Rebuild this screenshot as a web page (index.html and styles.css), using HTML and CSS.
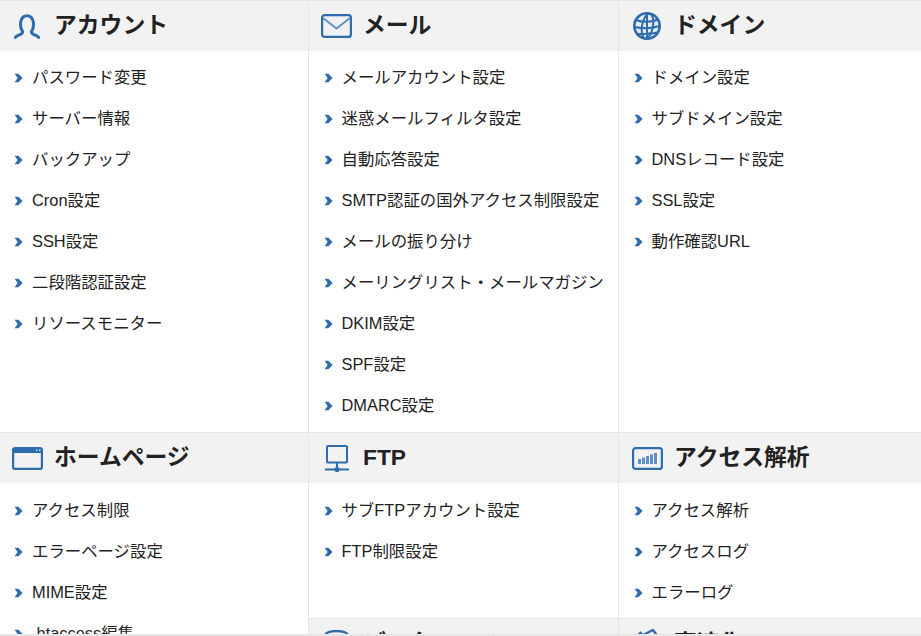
FILE: index.html
```html
<!DOCTYPE html>
<html lang="ja">
<head>
<meta charset="utf-8">
<title>サーバー管理</title>
<link rel="stylesheet" href="styles.css">
</head>
<body>
<svg class="defs" width="0" height="0" aria-hidden="true">
  <defs>
    <symbol id="chev" viewBox="0 0 9 10"><path d="M0.6 0.8 H4.4 L8.6 5 L4.4 9.2 H0.6 L3.6 5 Z"/></symbol>
  </defs>
</svg>
<main class="board">
  <div class="column">
    <section class="panel tall">
      <h2 class="head"><span class="slot"><svg width="26" height="25" viewBox="0 0 26 25" fill="none" stroke="#2f6cae" stroke-width="3" stroke-linecap="round"><path d="M8.500 17.500 C5 12 6 1.700 13 1.700 C20 1.700 21 12 17.500 17.500 C17 19 19 20.500 21 21 C23 21.700 24.300 22.800 24.700 23.500"/><path d="M8.500 17.500 C9 19 7 20.500 5 21 C3 21.700 1.700 22.800 1.300 23.500"/></svg></span><span>アカウント</span></h2>
      <ul class="list">
        <li><svg class="chev"><use href="#chev"/></svg>パスワード変更</li>
        <li><svg class="chev"><use href="#chev"/></svg>サーバー情報</li>
        <li><svg class="chev"><use href="#chev"/></svg>バックアップ</li>
        <li><svg class="chev"><use href="#chev"/></svg>Cron設定</li>
        <li><svg class="chev"><use href="#chev"/></svg>SSH設定</li>
        <li><svg class="chev"><use href="#chev"/></svg>二段階認証設定</li>
        <li><svg class="chev"><use href="#chev"/></svg>リソースモニター</li>
      </ul>
    </section>
    <section class="panel">
      <h2 class="head"><span class="slot"><svg width="31" height="23" viewBox="0 0 31 23" fill="none" stroke="#2f6cae" stroke-width="2.200"><rect x="1.100" y="1.100" width="28.800" height="20.800" rx="2"/><rect x="1" y="1" width="29" height="5" fill="#2f6cae" stroke="none"/><g fill="#cfe0f1" stroke="none"><rect x="24" y="2.500" width="1.500" height="1.500"/><rect x="27" y="2.500" width="1.500" height="1.500"/></g></svg></span><span>ホームページ</span></h2>
      <ul class="list lower">
        <li><svg class="chev"><use href="#chev"/></svg>アクセス制限</li>
        <li><svg class="chev"><use href="#chev"/></svg>エラーページ設定</li>
        <li><svg class="chev"><use href="#chev"/></svg>MIME設定</li>
        <li><svg class="chev"><use href="#chev"/></svg>.htaccess編集</li>
      </ul>
    </section>
  </div>
  <div class="column">
    <section class="panel tall">
      <h2 class="head"><span class="slot"><svg width="31" height="24" viewBox="0 0 31 24" fill="none" stroke="#2f6cae" stroke-width="2.200"><rect x="1.100" y="1.100" width="28.800" height="21.800" rx="2.500"/><path d="M2 4 L15.500 14.500 L29 4" stroke-width="2" stroke="#5f92c9"/></svg></span><span>メール</span></h2>
      <ul class="list">
        <li><svg class="chev"><use href="#chev"/></svg>メールアカウント設定</li>
        <li><svg class="chev"><use href="#chev"/></svg>迷惑メールフィルタ設定</li>
        <li><svg class="chev"><use href="#chev"/></svg>自動応答設定</li>
        <li><svg class="chev"><use href="#chev"/></svg>SMTP認証の国外アクセス制限設定</li>
        <li><svg class="chev"><use href="#chev"/></svg>メールの振り分け</li>
        <li><svg class="chev"><use href="#chev"/></svg>メーリングリスト・メールマガジン</li>
        <li><svg class="chev"><use href="#chev"/></svg>DKIM設定</li>
        <li><svg class="chev"><use href="#chev"/></svg>SPF設定</li>
        <li><svg class="chev"><use href="#chev"/></svg>DMARC設定</li>
      </ul>
    </section>
    <section class="panel short">
      <h2 class="head"><span class="slot"><svg width="25" height="27" viewBox="0 0 25 27" fill="none" stroke="#2f6cae" stroke-width="2"><rect x="3" y="1" width="20" height="16.500" rx="1"/><path d="M13 18 V24 M1 24.500 H25"/><circle cx="13" cy="24.500" r="2.600" fill="#2f6cae" stroke="none"/></svg></span><span>FTP</span></h2>
      <ul class="list lower">
        <li><svg class="chev"><use href="#chev"/></svg>サブFTPアカウント設定</li>
        <li><svg class="chev"><use href="#chev"/></svg>FTP制限設定</li>
      </ul>
    </section>
    <section class="panel">
      <h2 class="head"><span class="slot"><svg width="25" height="28" viewBox="0 0 25 28" fill="none" stroke="#2f6cae" stroke-width="2.400"><ellipse cx="12.500" cy="5" rx="11" ry="4"/><path d="M1.500 5 V23 C1.500 25.500 6 27 12.500 27 C19 27 23.500 25.500 23.500 23 V5"/></svg></span><span>データベース</span></h2>
    </section>
  </div>
  <div class="column">
    <section class="panel tall">
      <h2 class="head"><span class="slot"><svg width="28" height="28" viewBox="0 0 28 28" fill="#e4edf6" stroke="#2f6cae"><circle cx="14" cy="14" r="12.700" stroke-width="2.600"/><g fill="none" stroke-width="2"><ellipse cx="14.500" cy="14" rx="5.500" ry="12.500" transform="rotate(10 14 14)"/><path d="M14 1.500 V26.500 M3 8 C9 10.500 19 10.500 25 7.500 M1.500 15 C9 16.500 19 16.500 26.500 14 M4 22 C10 22 18 22 24 20.500"/></g></svg></span><span>ドメイン</span></h2>
      <ul class="list">
        <li><svg class="chev"><use href="#chev"/></svg>ドメイン設定</li>
        <li><svg class="chev"><use href="#chev"/></svg>サブドメイン設定</li>
        <li><svg class="chev"><use href="#chev"/></svg>DNSレコード設定</li>
        <li><svg class="chev"><use href="#chev"/></svg>SSL設定</li>
        <li><svg class="chev"><use href="#chev"/></svg>動作確認URL</li>
      </ul>
    </section>
    <section class="panel short">
      <h2 class="head"><span class="slot"><svg width="31" height="23" viewBox="0 0 31 23" fill="none" stroke="#2f6cae" stroke-width="2.200"><rect x="1.100" y="1.100" width="28.800" height="20.800" rx="2.500"/><g fill="#5f8fc4" stroke="none"><rect x="6" y="12" width="3" height="5"/><rect x="10" y="10.500" width="3" height="6.500"/><rect x="14" y="9" width="3" height="8"/><rect x="18" y="7.500" width="3" height="9.500"/><rect x="22" y="6" width="3" height="11"/></g></svg></span><span>アクセス解析</span></h2>
      <ul class="list lower">
        <li><svg class="chev"><use href="#chev"/></svg>アクセス解析</li>
        <li><svg class="chev"><use href="#chev"/></svg>アクセスログ</li>
        <li><svg class="chev"><use href="#chev"/></svg>エラーログ</li>
      </ul>
    </section>
    <section class="panel">
      <h2 class="head"><span class="slot"><svg width="26" height="30" viewBox="0 0 26 30" fill="none" stroke="#2f6cae" stroke-width="2.400"><path d="M1 9 L6.500 4 L10.500 8 M9 6 L19 1 L25 9"/><path d="M3 12 V28 H23 V12"/></svg></span><span>高速化</span></h2>
    </section>
  </div>
</main>
</body>
</html>
```

FILE: styles.css
```css
html, body {
  margin: 0;
  padding: 0;
  height: 100%;
  overflow: hidden;
  background: #fff;
}
body {
  font-family: "Liberation Sans", "Noto Sans CJK JP", sans-serif;
  color: #222;
}
.defs { position: absolute; }
.board {
  display: grid;
  grid-template-columns: 309px 310px 302px;
  height: 636px;
  border-bottom: 2px solid #e6e6e6;
  box-sizing: border-box;
  overflow: hidden;
}
.column {
  border-right: 1px solid #e6e6e6;
  min-width: 0;
}
.column:last-child { border-right: 0; }
.panel { border-top: 1px solid #e6e6e6; }
.tall { height: 432px; box-sizing: border-box; }
.short { height: 186px; box-sizing: border-box; }
.head {
  display: flex;
  align-items: center;
  height: 50px;
  margin: 0;
  background: #f2f2f2;
  font-size: 22.800px;
  line-height: 1;
  font-weight: 700;
  color: #222;
}
.column:last-child .head { padding-left: 1px; }
.head > span:last-child { margin-bottom: 2px; }
.slot {
  display: flex;
  justify-content: center;
  flex: none;
  width: 54px;
}
.list {
  list-style: none;
  margin: 0;
  padding: 4px 0 0;
}
.list.lower { padding-top: 5px; }
.column + .column .list { padding-left: 0.500px; }
.list li {
  display: flex;
  align-items: center;
  gap: 9px;
  height: 41px;
  padding-left: 14px;
  font-size: 16.400px;
  white-space: nowrap;
}
.chev {
  width: 9px;
  height: 10px;
  flex: none;
  margin-top: 5px;
  fill: #2f6cae;
}
```
